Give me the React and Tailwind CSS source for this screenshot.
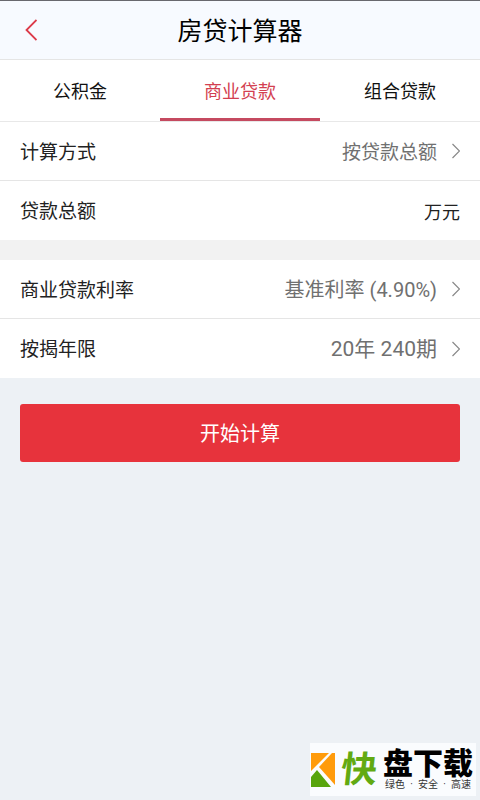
import { useState } from "react";

const tabs = ["公积金", "商业贷款", "组合贷款"];

const Arrow = () => (
  <svg className="ml-[15px] h-4 w-2 shrink-0" viewBox="0 0 8 16" fill="none" stroke="#888888" strokeWidth="1.2">
    <path d="M0.5 1L7.5 8L0.5 15" />
  </svg>
);

function SelectRow({ label, value, size = "text-[19px]", border = "" }) {
  return (
    <button
      type="button"
      className={`flex h-[59px] w-full items-center bg-white px-5 text-[19px] text-[#222222] ${border}`}
    >
      <span className="pt-1">{label}</span>
      <span className={`ml-auto text-[#707070] ${size}`}>{value}</span>
      <Arrow />
    </button>
  );
}

function Brand() {
  return (
    <div className="absolute right-1 bottom-1 flex h-[53px] w-[166px] items-center bg-[#fafcfe] pl-px">
      <svg className="h-[34px] w-6 shrink-0" viewBox="0 0 24 34">
        <path d="M0 0H18L0 18Z" fill="#ff9b0b" />
        <path d="M21 0H24V32L8 14Z" fill="#ff9b0b" />
        <path d="M0 24L6 17L20 34H0Z" fill="#58a50d" />
      </svg>
      <span className="ml-1.5 -skew-x-6 text-[36px] leading-none font-bold text-[#62aa12]">快</span>
      <div className="ml-1.5 flex flex-col">
        <span className="text-[30px] leading-[30px] font-black text-black">盘下载</span>
        <span className="flex justify-between px-0.5 text-[10px] leading-3 whitespace-nowrap text-[#333333]">
          <span>绿色</span>
          <span>·</span>
          <span>安全</span>
          <span>·</span>
          <span>高速</span>
        </span>
      </div>
    </div>
  );
}

export default function App() {
  const [active, setActive] = useState(1);
  const [amount, setAmount] = useState("");

  return (
    <div className="relative min-h-screen bg-[#edf1f5] font-[Roboto,'Noto_Sans_CJK_SC',sans-serif]">
      <header className="grid h-[60px] grid-cols-[64px_1fr_64px] items-center border-t border-b border-t-[#68686e] border-b-[#e5e5e5] bg-[#f7faff]">
        <button type="button" aria-label="返回" className="flex h-full items-center pl-[25px]">
          <svg className="h-[22px] w-3" viewBox="0 0 12 22" fill="none" stroke="#dc3a49" strokeWidth="1.8">
            <path d="M11.5 1L1.5 11L11.5 21" />
          </svg>
        </button>
        <h1 className="pt-1 text-center text-[25px] text-black">房贷计算器</h1>
      </header>

      {/* Loan type */}
      <nav className="grid h-[62px] grid-cols-3 border-b border-[#e8e8e8] bg-white">
        {tabs.map((tab, i) => (
          <button
            key={tab}
            type="button"
            onClick={() => setActive(i)}
            className={`border-b-3 pt-1.5 text-lg ${
              i === active ? "border-b-[#c54a60] text-[#d33f51]" : "border-b-transparent text-[#111111]"
            }`}
          >
            {tab}
          </button>
        ))}
      </nav>

      <main>
        <SelectRow label="计算方式" value="按贷款总额" size="pt-1 text-[19px]" border="border-b border-[#e5e5e5]" />
        <div className="flex h-[59px] items-center bg-white px-5 text-[#222222]">
          <label htmlFor="amount" className="pt-1 text-[19px]">贷款总额</label>
          <input
            id="amount"
            inputMode="decimal"
            value={amount}
            onChange={(e) => setAmount(e.target.value)}
            className="mx-3 min-w-0 flex-1 text-right text-[19px] outline-none"
          />
          <span className="pt-1 text-lg">万元</span>
        </div>
        <div className="h-5 bg-[#f2f2f2]" />
        <SelectRow label="商业贷款利率" value="基准利率 (4.90%)" size="pt-0.5 text-xl" border="border-b border-[#e5e5e5]" />
        <SelectRow label="按揭年限" value="20年 240期" size="pt-0.5 text-[21px]" />
        <div className="px-5 pt-[26px]">
          <button type="button" className="h-[58px] w-full rounded-[3px] bg-[#e7333c] pt-0.5 text-xl text-white">
            开始计算
          </button>
        </div>
      </main>

      <Brand />
    </div>
  );
}
